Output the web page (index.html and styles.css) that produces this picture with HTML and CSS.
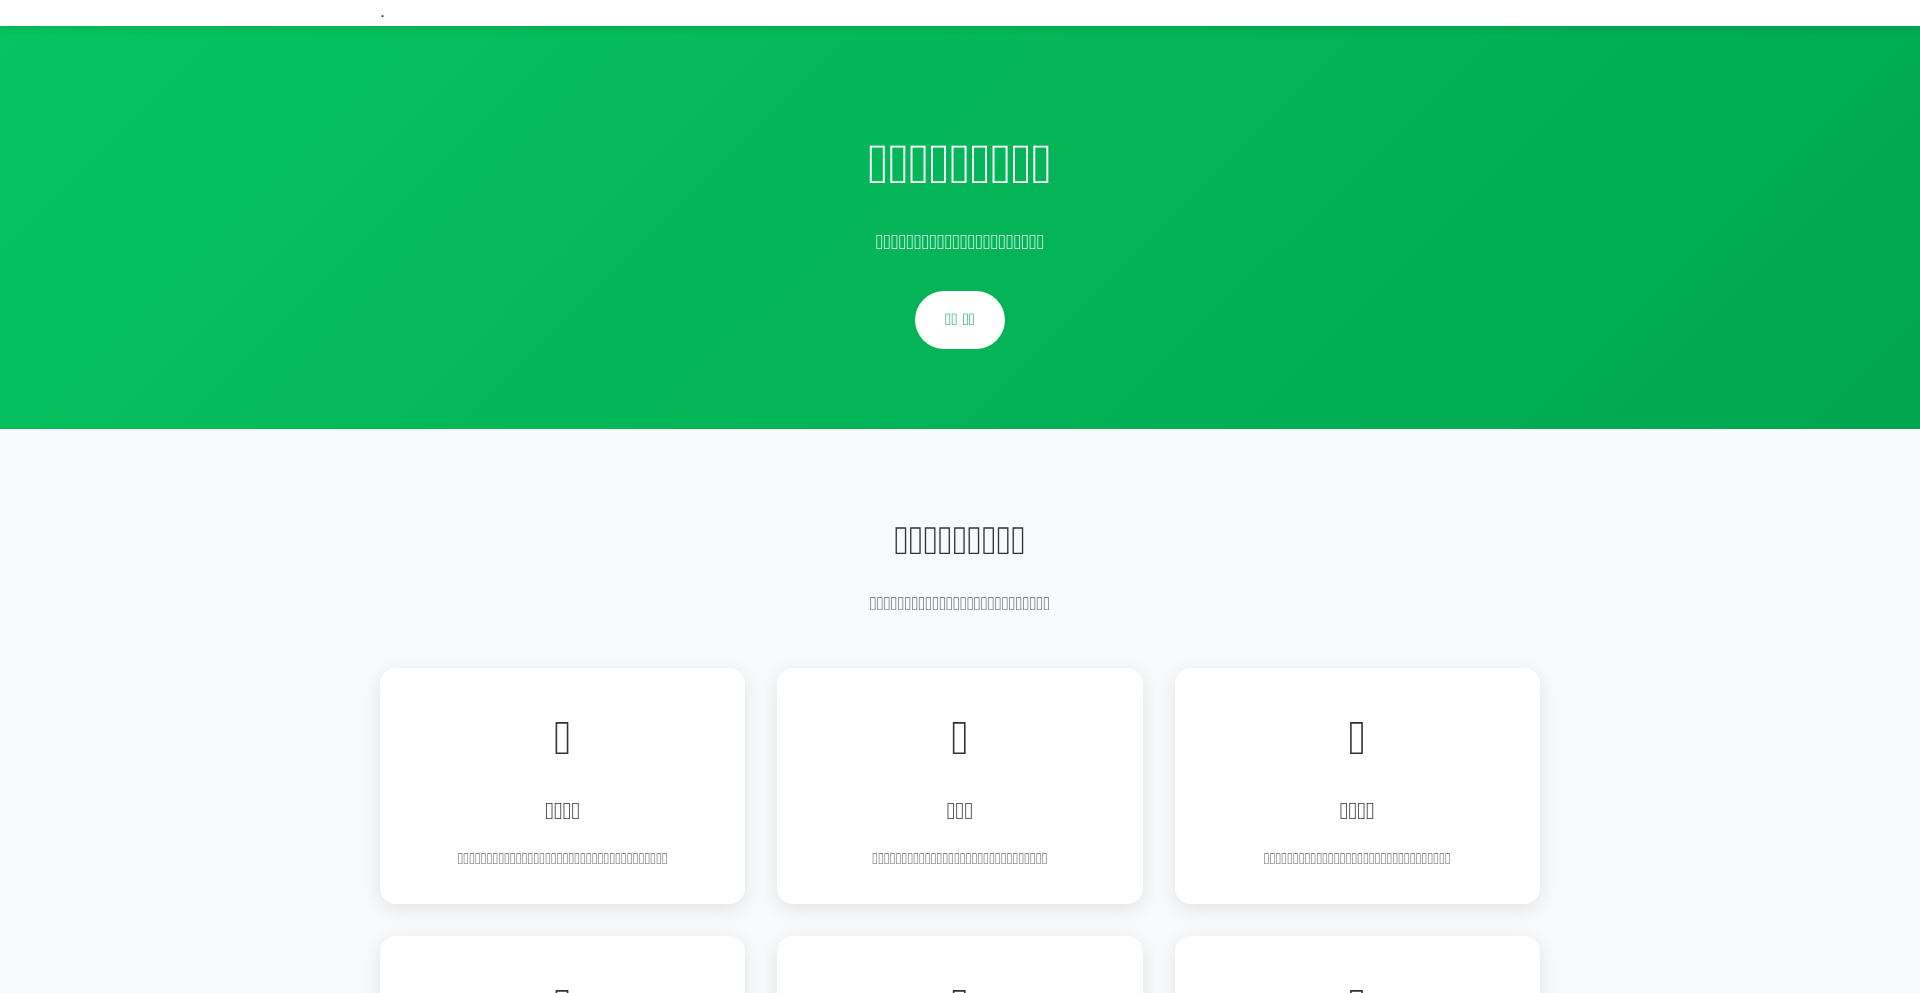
FILE: index.html
```html
<!DOCTYPE html>
<html lang="en">
<head>
<meta charset="utf-8">
<meta name="viewport" content="width=device-width, initial-scale=1">
<title>Home</title>
<link rel="stylesheet" href="styles.css">
</head>
<body>
<header class="site-header"><div class="container">.</div></header>
<main>
<section class="hero">
  <div class="container">
    <h1 class="hero-title">&#xF8F0;&#xF8F0;&#xF8F0;&#xF8F0;&#xF8F0;&#xF8F0;&#xF8F0;&#xF8F0;&#xF8F0;</h1>
    <p class="hero-text">&#xF8F0;&#xF8F0;&#xF8F0;&#xF8F0;&#xF8F0;&#xF8F0;&#xF8F0;&#xF8F0;&#xF8F0;&#xF8F0;&#xF8F0;&#xF8F0;&#xF8F0;&#xF8F0;&#xF8F0;&#xF8F0;&#xF8F0;&#xF8F0;&#xF8F0;&#xF8F0;&#xF8F0;&#xF8F0;</p>
    <a class="hero-button" href="#features">&#xF8F0;&#xF8F0; &#xF8F0;&#xF8F0;</a>
  </div>
</section>
<section class="features" id="features">
  <div class="container">
    <h2 class="section-title">&#xF8F0;&#xF8F0;&#xF8F0;&#xF8F0;&#xF8F0;&#xF8F0;&#xF8F0;&#xF8F0;&#xF8F0;</h2>
    <p class="section-text">&#xF8F0;&#xF8F0;&#xF8F0;&#xF8F0;&#xF8F0;&#xF8F0;&#xF8F0;&#xF8F0;&#xF8F0;&#xF8F0;&#xF8F0;&#xF8F0;&#xF8F0;&#xF8F0;&#xF8F0;&#xF8F0;&#xF8F0;&#xF8F0;&#xF8F0;&#xF8F0;&#xF8F0;&#xF8F0;&#xF8F0;&#xF8F0;&#xF8F0;&#xF8F0;</p>
    <div class="card-grid">
      <article class="card">
        <div class="card-icon">&#xF8F0;</div>
        <h3 class="card-title">&#xF8F0;&#xF8F0;&#xF8F0;&#xF8F0;</h3>
        <p class="card-text">&#xF8F0;&#xF8F0;&#xF8F0;&#xF8F0;&#xF8F0;&#xF8F0;&#xF8F0;&#xF8F0;&#xF8F0;&#xF8F0;&#xF8F0;&#xF8F0;&#xF8F0;&#xF8F0;&#xF8F0;&#xF8F0;&#xF8F0;&#xF8F0;&#xF8F0;&#xF8F0;&#xF8F0;&#xF8F0;&#xF8F0;&#xF8F0;&#xF8F0;&#xF8F0;&#xF8F0;&#xF8F0;&#xF8F0;&#xF8F0;&#xF8F0;&#xF8F0;&#xF8F0;&#xF8F0;&#xF8F0;&#xF8F0;</p>
      </article>
      <article class="card">
        <div class="card-icon">&#xF8F0;</div>
        <h3 class="card-title">&#xF8F0;&#xF8F0;&#xF8F0;</h3>
        <p class="card-text">&#xF8F0;&#xF8F0;&#xF8F0;&#xF8F0;&#xF8F0;&#xF8F0;&#xF8F0;&#xF8F0;&#xF8F0;&#xF8F0;&#xF8F0;&#xF8F0;&#xF8F0;&#xF8F0;&#xF8F0;&#xF8F0;&#xF8F0;&#xF8F0;&#xF8F0;&#xF8F0;&#xF8F0;&#xF8F0;&#xF8F0;&#xF8F0;&#xF8F0;&#xF8F0;&#xF8F0;&#xF8F0;&#xF8F0;&#xF8F0;</p>
      </article>
      <article class="card">
        <div class="card-icon">&#xF8F0;</div>
        <h3 class="card-title">&#xF8F0;&#xF8F0;&#xF8F0;&#xF8F0;</h3>
        <p class="card-text">&#xF8F0;&#xF8F0;&#xF8F0;&#xF8F0;&#xF8F0;&#xF8F0;&#xF8F0;&#xF8F0;&#xF8F0;&#xF8F0;&#xF8F0;&#xF8F0;&#xF8F0;&#xF8F0;&#xF8F0;&#xF8F0;&#xF8F0;&#xF8F0;&#xF8F0;&#xF8F0;&#xF8F0;&#xF8F0;&#xF8F0;&#xF8F0;&#xF8F0;&#xF8F0;&#xF8F0;&#xF8F0;&#xF8F0;&#xF8F0;&#xF8F0;&#xF8F0;</p>
      </article>
      <article class="card"><div class="card-icon">&#xF8F0;</div></article>
      <article class="card"><div class="card-icon">&#xF8F0;</div></article>
      <article class="card"><div class="card-icon">&#xF8F0;</div></article>
    </div>
  </div>
</section>
</main>
</body>
</html>
```
FILE: styles.css
```css
* { margin: 0; padding: 0; box-sizing: border-box; }

body {
  font-family: "WenQuanYi Zen Hei", Cantarell, "Liberation Sans", Arial, sans-serif;
  font-size: 16px;
  line-height: 1.6;
  color: #333;
  background: #f8fafc;
}

.container { max-width: 1200px; margin: 0 auto; padding: 0 20px; }

.site-header {
  position: fixed;
  top: 0;
  left: 0;
  right: 0;
  z-index: 10;
  background: #fff;
  box-shadow: 0 2px 10px rgba(0, 0, 0, 0.1);
}

.hero {
  padding: 120px 0 80px;
  text-align: center;
  color: #fff;
  background: linear-gradient(135deg, #07c460 0%, #00a650 100%);
}
.hero-title { font-size: 56px; font-weight: 700; margin-bottom: 16px; }
.hero-text { font-size: 21px; margin-bottom: 32px; opacity: 0.9; }
.hero-button {
  display: inline-block;
  vertical-align: top;
  padding: 15px 30px;
  border-radius: 50px;
  background: #fff;
  color: #00a650;
  font-size: 17px;
  line-height: 28px;
  font-weight: 700;
  text-decoration: none;
}

.features { padding: 80px 0; text-align: center; }
.section-title { font-size: 40px; margin-bottom: 16px; }
.section-text { font-size: 19px; color: #666; margin-bottom: 48px; }

.card-grid { display: grid; grid-template-columns: repeat(3, minmax(0, 1fr)); gap: 32px; }
.card {
  padding: 32px;
  border-radius: 16px;
  background: #fff;
  box-shadow: 0 5px 20px rgba(0, 0, 0, 0.1);
}
.card-icon { font-size: 48px; margin-bottom: 16px; }
.card-title { font-size: 24px; margin-bottom: 16px; }
.card-text { color: #666; }
```
